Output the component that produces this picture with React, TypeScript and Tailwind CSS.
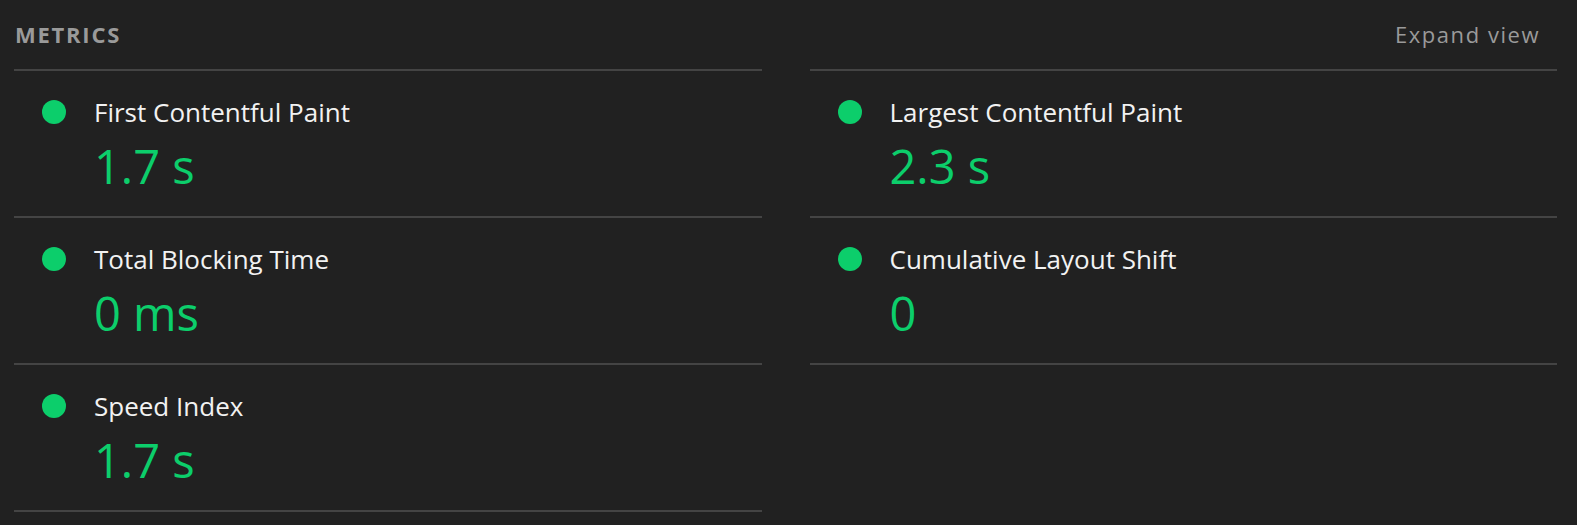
import React from "react";

type Metric = { title: string; value: string };

const left: Metric[] = [
  { title: "First Contentful Paint", value: "1.7 s" },
  { title: "Total Blocking Time", value: "0 ms" },
  { title: "Speed Index", value: "1.7 s" },
];
const right: Metric[] = [
  { title: "Largest Contentful Paint", value: "2.3 s" },
  { title: "Cumulative Layout Shift", value: "0" },
];

function Row({ m }: { m: Metric }) {
  return (
    <div className="flex h-[147px] border-b-2 border-[#444444] pl-[28px] pt-[28px]">
      <div className="mt-[1px] h-[24px] w-[24px] shrink-0 rounded-full bg-[#0cce6b]" />
      <div className="ml-[28px] flex flex-col">
        <div className="text-[26px] leading-[26px] text-[#f2f2f2]">{m.title}</div>
        <div className="mt-[18px] text-[47px] leading-[47px] text-[#0cce6b]">{m.value}</div>
      </div>
    </div>
  );
}

export default function App() {
  return (
    <div
      className="h-[525px] w-[1577px] overflow-hidden bg-[#212121] pl-[14px] pr-[20px]"
      style={{ fontFamily: '"Open Sans", "Noto Sans", sans-serif' }}
    >
      <div className="flex h-[69px] items-start justify-between pt-[19px]">
        <div className="pl-[1px] text-[22px] font-bold leading-[30px] tracking-[0.08em] text-[#9a9a9a]">
          METRICS
        </div>
        <div className="pr-[17px] text-[22px] leading-[30px] tracking-[0.07em] text-[#9a9a9a]">
          Expand view
        </div>
      </div>
      <div className="grid grid-cols-2 gap-x-[48px]">
        <div className="border-t-2 border-[#444444]">
          {left.map((m) => (
            <Row key={m.title} m={m} />
          ))}
        </div>
        <div className="border-t-2 border-[#444444]">
          {right.map((m) => (
            <Row key={m.title} m={m} />
          ))}
        </div>
      </div>
    </div>
  );
}
